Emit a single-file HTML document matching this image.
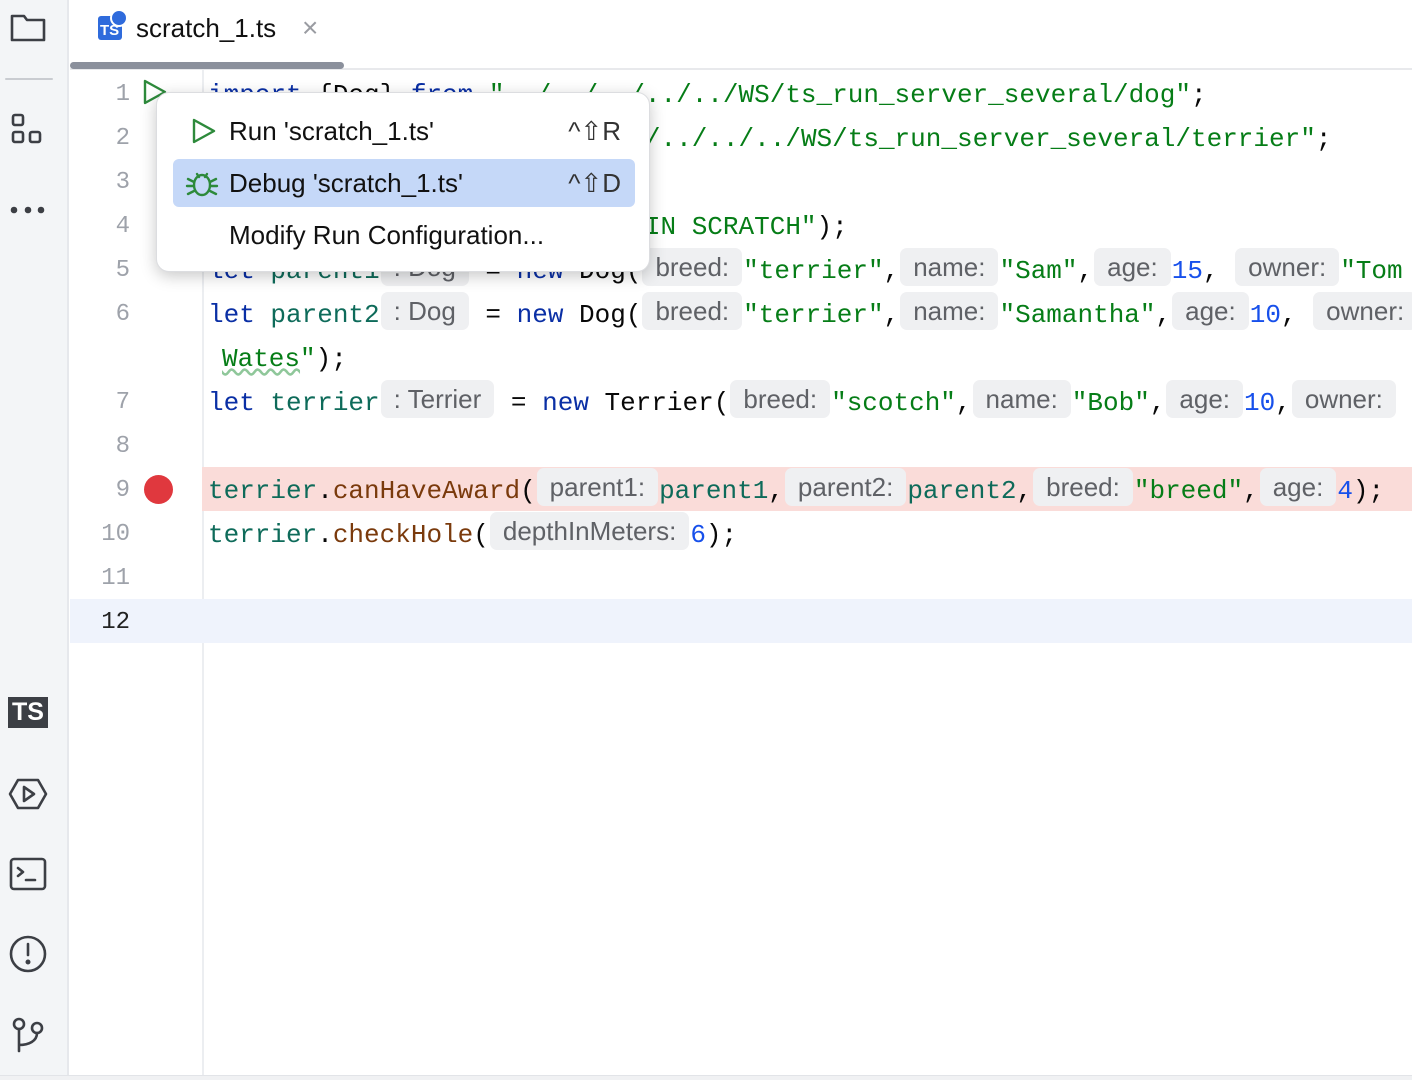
<!DOCTYPE html>
<html><head><meta charset="utf-8">
<style>
*{margin:0;padding:0;box-sizing:border-box}
body{width:1412px;height:1080px;background:#fff;position:relative;overflow:hidden;font-family:"Liberation Sans",sans-serif}
.side{position:absolute;left:0;top:0;width:69px;height:1080px;background:#f3f5f7;border-right:2px solid #e6e8ec}
.code{position:absolute;left:208px;font-family:"Liberation Mono",monospace;font-size:26px;white-space:pre;color:#080808;height:44px;line-height:44px;top:2px}
.ln{position:absolute;width:60px;left:70px;text-align:right;font-family:"Liberation Mono",monospace;font-size:24px;color:#9ea2aa;line-height:44px}
.k{color:#0a2fa5}.s{color:#067d17}.v{color:#0e6b5a}.m{color:#7a3a0c}.n{color:#1750eb}
.h{font-family:"Liberation Sans",sans-serif;font-size:26px;color:#5f6166;background:#eff0f2;border-radius:7px;padding:0 13px;margin:0 1px;display:inline-block;line-height:38px;vertical-align:middle;position:relative;top:-4px}
.pop{position:absolute;left:156px;top:92px;width:494px;height:180px;background:#fff;border-radius:13px;box-shadow:0 4px 16px rgba(0,0,0,.22);border:1px solid #dcdde0}
.it{position:absolute;left:72px;font-size:26px;color:#111;line-height:48px}
.sc{position:absolute;right:28px;font-size:26px;color:#333;line-height:48px}
</style></head><body>
<div class="side">
<svg width="68" height="1080" fill="none" stroke="#3c3f45" stroke-width="2.6" stroke-linejoin="round" stroke-linecap="round">
<path d="M12 16h12l3 4h17v20H12z"/>
<line x1="6" y1="79" x2="52" y2="79" stroke="#c9ccd1" stroke-width="2"/>
<rect x="13" y="115" width="10" height="10" rx="2"/><rect x="13" y="132" width="10" height="10" rx="2"/><rect x="30" y="132" width="10" height="10" rx="2"/>
<circle cx="14" cy="210" r="2" fill="#3c3f45"/><circle cx="28" cy="210" r="2" fill="#3c3f45"/><circle cx="41" cy="210" r="2" fill="#3c3f45"/>
<path d="M18 780h20l8 14-8 14H18l-8-14z"/><path d="M24 787v14l10-7z"/>
<rect x="11" y="859" width="34" height="30" rx="3"/><path d="M18 868l5 4-5 4M26 880h9"/>
<circle cx="28" cy="954" r="17"/><path d="M28 944v11"/><circle cx="28" cy="962" r="1.2" fill="#3c3f45"/>
<circle cx="19" cy="1024" r="5"/><circle cx="37" cy="1028" r="5"/><path d="M19 1029v22M19 1045c10 0 18-4 18-12"/>
</svg>
<div style="position:absolute;left:8px;top:697px;width:40px;height:31px;background:#3c3f45;color:#fff;font-weight:bold;font-size:25px;text-align:center;line-height:31px">TS</div>
</div>
<!-- tab -->
<div style="position:absolute;left:98px;top:16px;width:24px;height:24px;background:#2f6bdc;border-radius:3px;color:#fff;font-weight:bold;font-size:15px;line-height:30px;padding-left:2px">TS</div>
<div style="position:absolute;left:110px;top:9px;width:18px;height:18px;background:#2f6bdc;border:2px solid #fff;border-radius:50%"></div>
<div style="position:absolute;left:136px;top:13px;font-size:26px;color:#111">scratch_1.ts</div>
<div style="position:absolute;left:302px;top:12px;font-size:28px;color:#9a9ca2">×</div>
<div style="position:absolute;left:70px;top:68px;width:1342px;height:2px;background:#e8e9ec"></div>
<div style="position:absolute;left:70px;top:62px;width:274px;height:7px;background:#8b909c;border-radius:4px"></div>
<!-- gutter line & bottom -->
<div style="position:absolute;left:202px;top:70px;width:2px;height:1006px;background:#eceef1"></div>
<div style="position:absolute;left:0;top:1075px;width:1412px;height:5px;background:#f0f1f3;border-top:1px solid #e2e4e8"></div>
<!-- highlights -->
<div style="position:absolute;left:202px;top:467px;width:1210px;height:44px;background:#fadcd9"></div>
<div style="position:absolute;left:70px;top:599px;width:1342px;height:44px;background:#eff3fc"></div>
<!-- line numbers -->
<div class="ln" style="top:73px">1</div><div class="ln" style="top:117px">2</div><div class="ln" style="top:161px">3</div><div class="ln" style="top:205px">4</div><div class="ln" style="top:249px">5</div><div class="ln" style="top:293px">6</div><div class="ln" style="top:381px">7</div><div class="ln" style="top:425px">8</div><div class="ln" style="top:469px">9</div><div class="ln" style="top:513px">10</div><div class="ln" style="top:557px">11</div><div class="ln" style="top:601px;color:#222">12</div>
<svg style="position:absolute;left:140px;top:78px" width="30" height="30"><path d="M5 3v22l20-11z" fill="none" stroke="#2d8a3b" stroke-width="2.4" stroke-linejoin="round"/></svg>
<div style="position:absolute;left:144px;top:475px;width:29px;height:29px;border-radius:50%;background:#e0383e"></div>
<!-- code -->
<div class="code" style="top:73px"><span class="k">import</span> {Dog} <span class="k">from</span> <span class="s">"../../../../../WS/ts_run_server_several/dog"</span>;</div>
<div class="code" style="top:117px"><span class="k">import</span> {Terrier} <span class="k">from</span> <span class="s">"../../../../../WS/ts_run_server_several/terrier"</span>;</div>
<div class="code" style="top:205px">console.<span class="m">log</span>(<span class="s">"HELLO FROM WITHIN SCRATCH"</span>);</div>
<div class="code" style="top:249px"><span class="k">let</span> <span class="v">parent1</span><span class="h">: Dog</span> = <span class="k">new</span> Dog(<span class="h">breed:</span><span class="s">"terrier"</span>,<span class="h">name:</span><span class="s">"Sam"</span>,<span class="h">age:</span><span class="n">15</span>, <span class="h">owner:</span><span class="s">"Tom</span></div>
<div class="code" style="top:293px"><span class="k">let</span> <span class="v">parent2</span><span class="h">: Dog</span> = <span class="k">new</span> Dog(<span class="h">breed:</span><span class="s">"terrier"</span>,<span class="h">name:</span><span class="s">"Samantha"</span>,<span class="h">age:</span><span class="n">10</span>, <span class="h">owner:</span></div>
<div class="code" style="top:337px;left:222px"><span class="s" style="text-decoration:underline wavy #8fc79a">Wates</span><span class="s">"</span>);</div>
<div class="code" style="top:381px"><span class="k">let</span> <span class="v">terrier</span><span class="h">: Terrier</span> = <span class="k">new</span> Terrier(<span class="h">breed:</span><span class="s">"scotch"</span>,<span class="h">name:</span><span class="s">"Bob"</span>,<span class="h">age:</span><span class="n">10</span>,<span class="h">owner:</span></div>
<div class="code" style="top:469px"><span class="v">terrier</span>.<span class="m">canHaveAward</span>(<span class="h">parent1:</span><span class="v">parent1</span>,<span class="h">parent2:</span><span class="v">parent2</span>,<span class="h">breed:</span><span class="s">"breed"</span>,<span class="h">age:</span><span class="n">4</span>);</div>
<div class="code" style="top:513px"><span class="v">terrier</span>.<span class="m">checkHole</span>(<span class="h">depthInMeters:</span><span class="n">6</span>);</div>
<!-- popup -->
<div class="pop">
<svg style="position:absolute;left:32px;top:24px" width="30" height="30"><path d="M5 3v22l20-11z" fill="none" stroke="#2d8a3b" stroke-width="2.4" stroke-linejoin="round"/></svg>
<div class="it" style="top:14px">Run 'scratch_1.ts'</div><div class="sc" style="top:14px">^⇧R</div>
<div style="position:absolute;left:16px;top:66px;width:462px;height:48px;background:#c5d8f8;border-radius:6px"></div>
<svg style="position:absolute;left:28px;top:74px" width="34" height="32" fill="none" stroke="#2d8a3b" stroke-width="2.4" stroke-linecap="round"><ellipse cx="17" cy="18" rx="8" ry="10"/><path d="M12 7l2 3M22 7l-2 3M3 12l6 3M31 12l-6 3M2 19h7M32 19h-7M3 27l6-3M31 27l-6-3"/></svg>
<div class="it" style="top:66px">Debug 'scratch_1.ts'</div><div class="sc" style="top:66px">^⇧D</div>
<div class="it" style="top:118px">Modify Run Configuration...</div>
</div>
</body></html>
